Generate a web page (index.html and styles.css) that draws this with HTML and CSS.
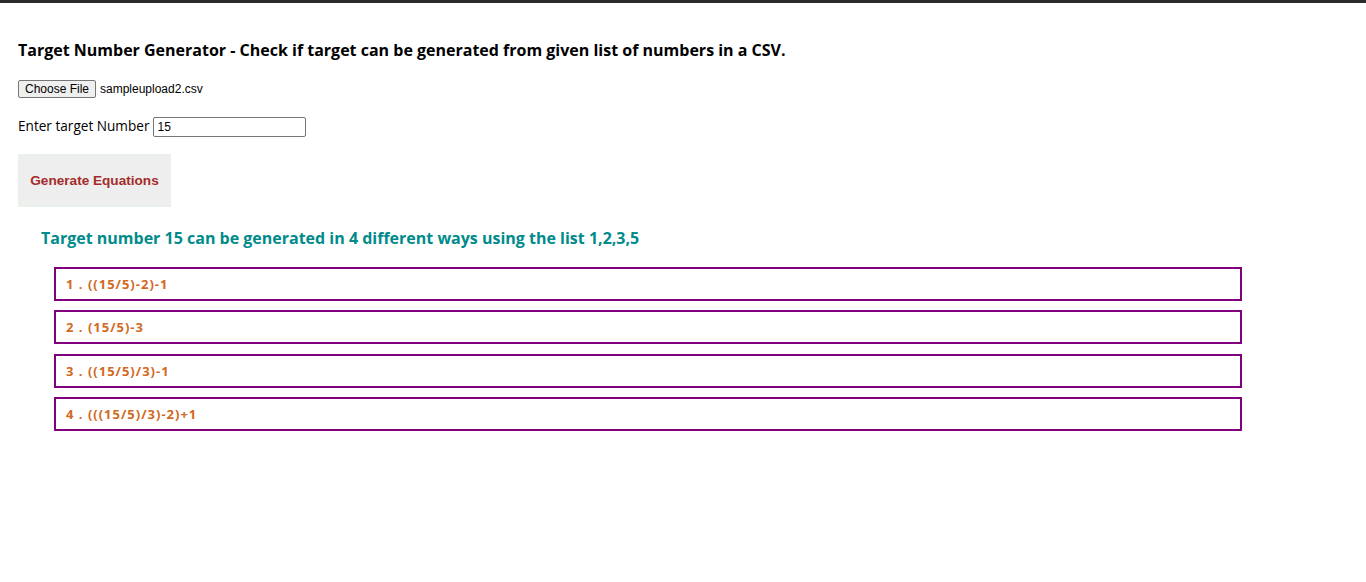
FILE: index.html
```html
<!DOCTYPE html>
<html>
<head>
<meta charset="utf-8">
<link rel="stylesheet" href="styles.css">
</head>
<body>
<div class="topbar"></div>
<main class="page">
  <h1 class="title">Target Number Generator - Check if target can be generated from given list of numbers in a CSV.</h1>
  <div class="file-row">
    <button class="file-btn" type="button">Choose File</button>
    <span class="file-name">sampleupload2.csv</span>
  </div>
  <div class="target-row">
    <label class="target-label" for="target">Enter target Number</label>
    <input class="target-input" id="target" type="text" value="15">
  </div>
  <button class="generate" type="button">Generate Equations</button>
  <section class="results">
    <h2 class="results-title">Target number 15 can be generated in 4 different ways using the list 1,2,3,5</h2>
    <ul class="eq-list">
      <li class="eq">1 . ((15/5)-2)-1</li>
      <li class="eq">2 . (15/5)-3</li>
      <li class="eq">3 . ((15/5)/3)-1</li>
      <li class="eq">4 . (((15/5)/3)-2)+1</li>
    </ul>
  </section>
</main>
</body>
</html>
```

FILE: styles.css
```css
html, body {
  margin: 0;
  padding: 0;
  background: #ffffff;
}
body {
  font-family: "Open Sans", "Noto Sans", sans-serif;
  color: #000;
}
.topbar {
  height: 3px;
  background: #2b2b2b;
}
.page {
  padding: 0 18px;
}
.title {
  margin: 0;
  padding-top: 37px;
  font-size: 16px;
  font-weight: 700;
  line-height: 20px;
}
.file-row {
  margin-top: 20px;
  display: flex;
  align-items: center;
  gap: 4px;
  height: 18px;
}
.file-btn {
  font-family: "Liberation Sans", Arial, sans-serif;
  font-size: 12px;
  height: 18px;
  width: 78px;
  padding: 0;
  margin: 0;
  background: #efefef;
  border: 1px solid #767676;
  border-radius: 2px;
  color: #000;
}
.file-name {
  font-family: "Liberation Sans", Arial, sans-serif;
  font-size: 12px;
}
.target-row {
  margin-top: 19px;
  display: flex;
  align-items: center;
  gap: 4px;
  height: 20px;
}
.target-label {
  font-size: 13.6px;
  line-height: 18px;
  padding-bottom: 2px;
}
.target-input {
  box-sizing: border-box;
  width: 153px;
  height: 20px;
  margin: 0;
  padding: 1px 3px;
  border: 1px solid #767676;
  border-radius: 2px;
  font-family: "Liberation Sans", Arial, sans-serif;
  font-size: 12px;
}
.generate {
  display: block;
  margin-top: 17px;
  box-sizing: border-box;
  width: 153px;
  height: 53px;
  padding: 0;
  background: #eeeeee;
  border: 1px solid #e6f3e6;
  font-family: "Liberation Sans", Arial, sans-serif;
  font-size: 13.6px;
  font-weight: 700;
  color: #a52a2a;
  cursor: pointer;
}
.results {
  padding-left: 23px;
}
.results-title {
  margin: 0;
  padding-top: 20px;
  font-size: 16px;
  font-weight: 700;
  line-height: 22px;
  color: #008b8b;
}
.eq-list {
  list-style: none;
  margin: 18px 0 0 13px;
  padding: 0;
  width: 1188px;
  display: flex;
  flex-direction: column;
  gap: 9.4px;
}
.eq {
  box-sizing: border-box;
  height: 34px;
  border: 2px solid #800080;
  padding: 0 10px;
  display: flex;
  align-items: center;
  font-size: 13px;
  font-weight: 700;
  letter-spacing: 1px;
  color: #d2691e;
}
```
